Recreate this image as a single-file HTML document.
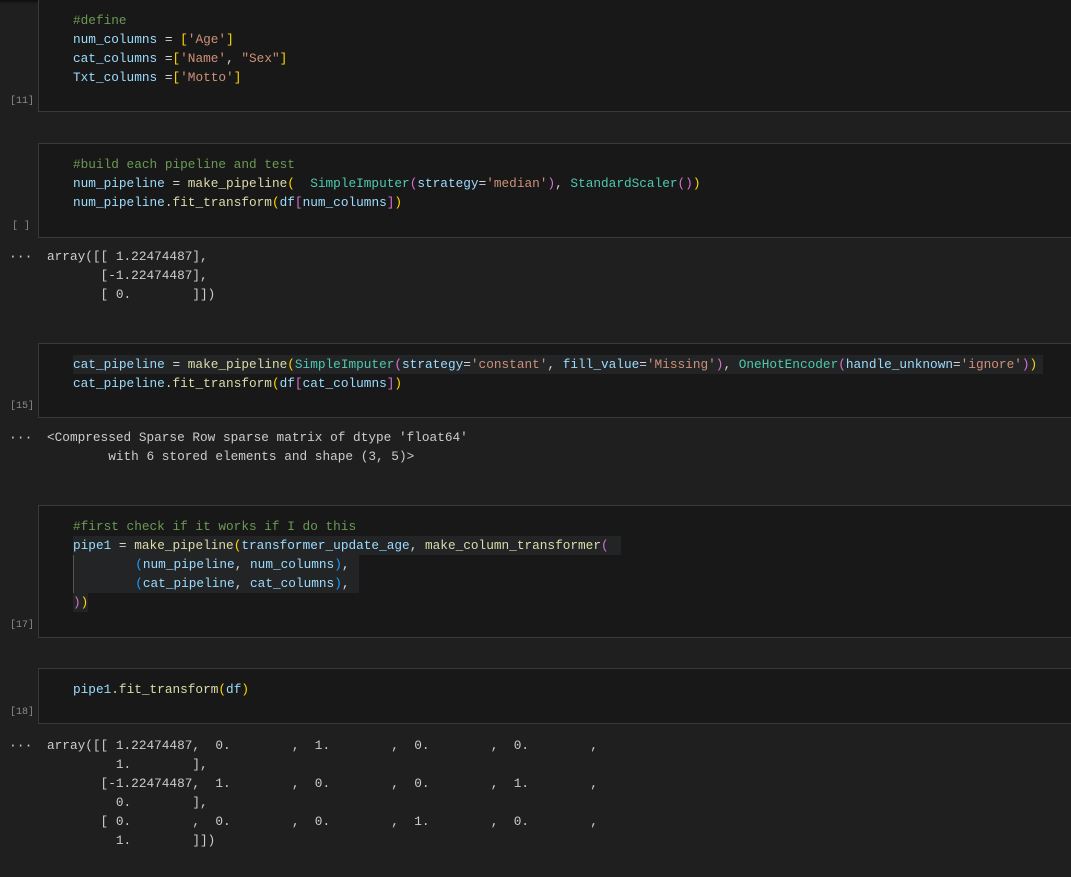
<!DOCTYPE html>
<html><head><meta charset="utf-8"><style>
html,body{margin:0;padding:0;background:#1f1f1f;width:1071px;height:877px;overflow:hidden;position:relative;font-family:"Liberation Mono",monospace;}
.cell{position:absolute;left:38px;width:1040px;background:#181818;border:1px solid #3a3a3a;box-sizing:border-box;}
.l{position:absolute;white-space:pre;font-size:12.75px;line-height:19px;height:19px;margin-top:1px;}
.c{left:73px;color:#9cdcfe;}
.o{left:47px;color:#cccccc;}
.n{position:absolute;font-size:10px;color:#8a8a8a;white-space:pre;line-height:12px;}
.d{position:absolute;left:9px;color:#cccccc;font-size:13px;line-height:12px;margin-top:1px;}
.cm{color:#6a9955}.f{color:#dcdcaa}.s{color:#ce9178}.k{color:#4ec9b0}.y{color:#ffd700}.p{color:#da70d6}.b{color:#179fff}.w{color:#d4d4d4}
.hl{background:#222426}
</style></head><body>
<div style="position:absolute;left:0;top:0;width:1071px;height:4px;background:linear-gradient(#0e0e0e,#1f1f1f)"></div>
<div class="cell" style="top:-2px;height:114px"></div>
<div class="cell" style="top:143px;height:95px"></div>
<div class="cell" style="top:343px;height:75px"></div>
<div class="cell" style="top:505px;height:133px"></div>
<div class="cell" style="top:668px;height:56px"></div>

<div class="l c" style="top:10px"><span class="cm">#define</span></div>
<div class="l c" style="top:29px">num_columns <span class="w">=</span> <span class="y">[</span><span class="s">'Age'</span><span class="y">]</span></div>
<div class="l c" style="top:48px">cat_columns <span class="w">=</span><span class="y">[</span><span class="s">'Name'</span><span class="w">,</span> <span class="s">"Sex"</span><span class="y">]</span></div>
<div class="l c" style="top:67px">Txt_columns <span class="w">=</span><span class="y">[</span><span class="s">'Motto'</span><span class="y">]</span></div>
<div class="n" style="left:10px;top:96px">[11]</div>

<div class="l c" style="top:154px"><span class="cm">#build each pipeline and test</span></div>
<div class="l c" style="top:173px">num_pipeline <span class="w">=</span> <span class="f">make_pipeline</span><span class="y">(</span>  <span class="k">SimpleImputer</span><span class="p">(</span>strategy<span class="w">=</span><span class="s">'median'</span><span class="p">)</span><span class="w">,</span> <span class="k">StandardScaler</span><span class="p">()</span><span class="y">)</span></div>
<div class="l c" style="top:192px">num_pipeline<span class="w">.</span><span class="f">fit_transform</span><span class="y">(</span>df<span class="p">[</span>num_columns<span class="p">]</span><span class="y">)</span></div>
<div class="n" style="left:12px;top:221px">[ ]</div>

<div class="d" style="top:250px">···</div>
<div class="l o" style="top:246px">array([[ 1.22474487],</div>
<div class="l o" style="top:265px">       [-1.22474487],</div>
<div class="l o" style="top:284px">       [ 0.        ]])</div>

<div class="l c hl" style="top:354px;width:970px">cat_pipeline <span class="w">=</span> <span class="f">make_pipeline</span><span class="y">(</span><span class="k">SimpleImputer</span><span class="p">(</span>strategy<span class="w">=</span><span class="s">'constant'</span><span class="w">,</span> fill_value<span class="w">=</span><span class="s">'Missing'</span><span class="p">)</span><span class="w">,</span> <span class="k">OneHotEncoder</span><span class="p">(</span>handle_unknown<span class="w">=</span><span class="s">'ignore'</span><span class="p">)</span><span class="y">)</span></div>
<div class="l c" style="top:373px">cat_pipeline<span class="w">.</span><span class="f">fit_transform</span><span class="y">(</span>df<span class="p">[</span>cat_columns<span class="p">]</span><span class="y">)</span></div>
<div class="n" style="left:10px;top:401px">[15]</div>

<div class="d" style="top:431px">···</div>
<div class="l o" style="top:427px">&lt;Compressed Sparse Row sparse matrix of dtype 'float64'</div>
<div class="l o" style="top:446px">        with 6 stored elements and shape (3, 5)&gt;</div>

<div class="l c" style="top:516px"><span class="cm">#first check if it works if I do this</span></div>
<div class="l c hl" style="top:535px;width:548px">pipe1 <span class="w">=</span> <span class="f">make_pipeline</span><span class="y">(</span>transformer_update_age<span class="w">,</span> <span class="f">make_column_transformer</span><span class="p">(</span></div>
<div class="l c hl" style="top:554px;width:285px;border-left:1px solid #555">        <span class="b">(</span>num_pipeline<span class="w">,</span> num_columns<span class="b">)</span><span class="w">,</span></div>
<div class="l c hl" style="top:573px;width:285px;border-left:1px solid #555">        <span class="b">(</span>cat_pipeline<span class="w">,</span> cat_columns<span class="b">)</span><span class="w">,</span></div>
<div class="l c hl" style="top:592px;width:15px"><span class="p">)</span><span class="y">)</span></div>
<div class="n" style="left:10px;top:620px">[17]</div>

<div class="l c" style="top:679px">pipe1<span class="w">.</span><span class="f">fit_transform</span><span class="y">(</span>df<span class="y">)</span></div>
<div class="n" style="left:10px;top:707px">[18]</div>

<div class="d" style="top:739px">···</div>
<div class="l o" style="top:735px">array([[ 1.22474487,  0.        ,  1.        ,  0.        ,  0.        ,</div>
<div class="l o" style="top:754px">         1.        ],</div>
<div class="l o" style="top:773px">       [-1.22474487,  1.        ,  0.        ,  0.        ,  1.        ,</div>
<div class="l o" style="top:792px">         0.        ],</div>
<div class="l o" style="top:811px">       [ 0.        ,  0.        ,  0.        ,  1.        ,  0.        ,</div>
<div class="l o" style="top:830px">         1.        ]])</div>
</body></html>
